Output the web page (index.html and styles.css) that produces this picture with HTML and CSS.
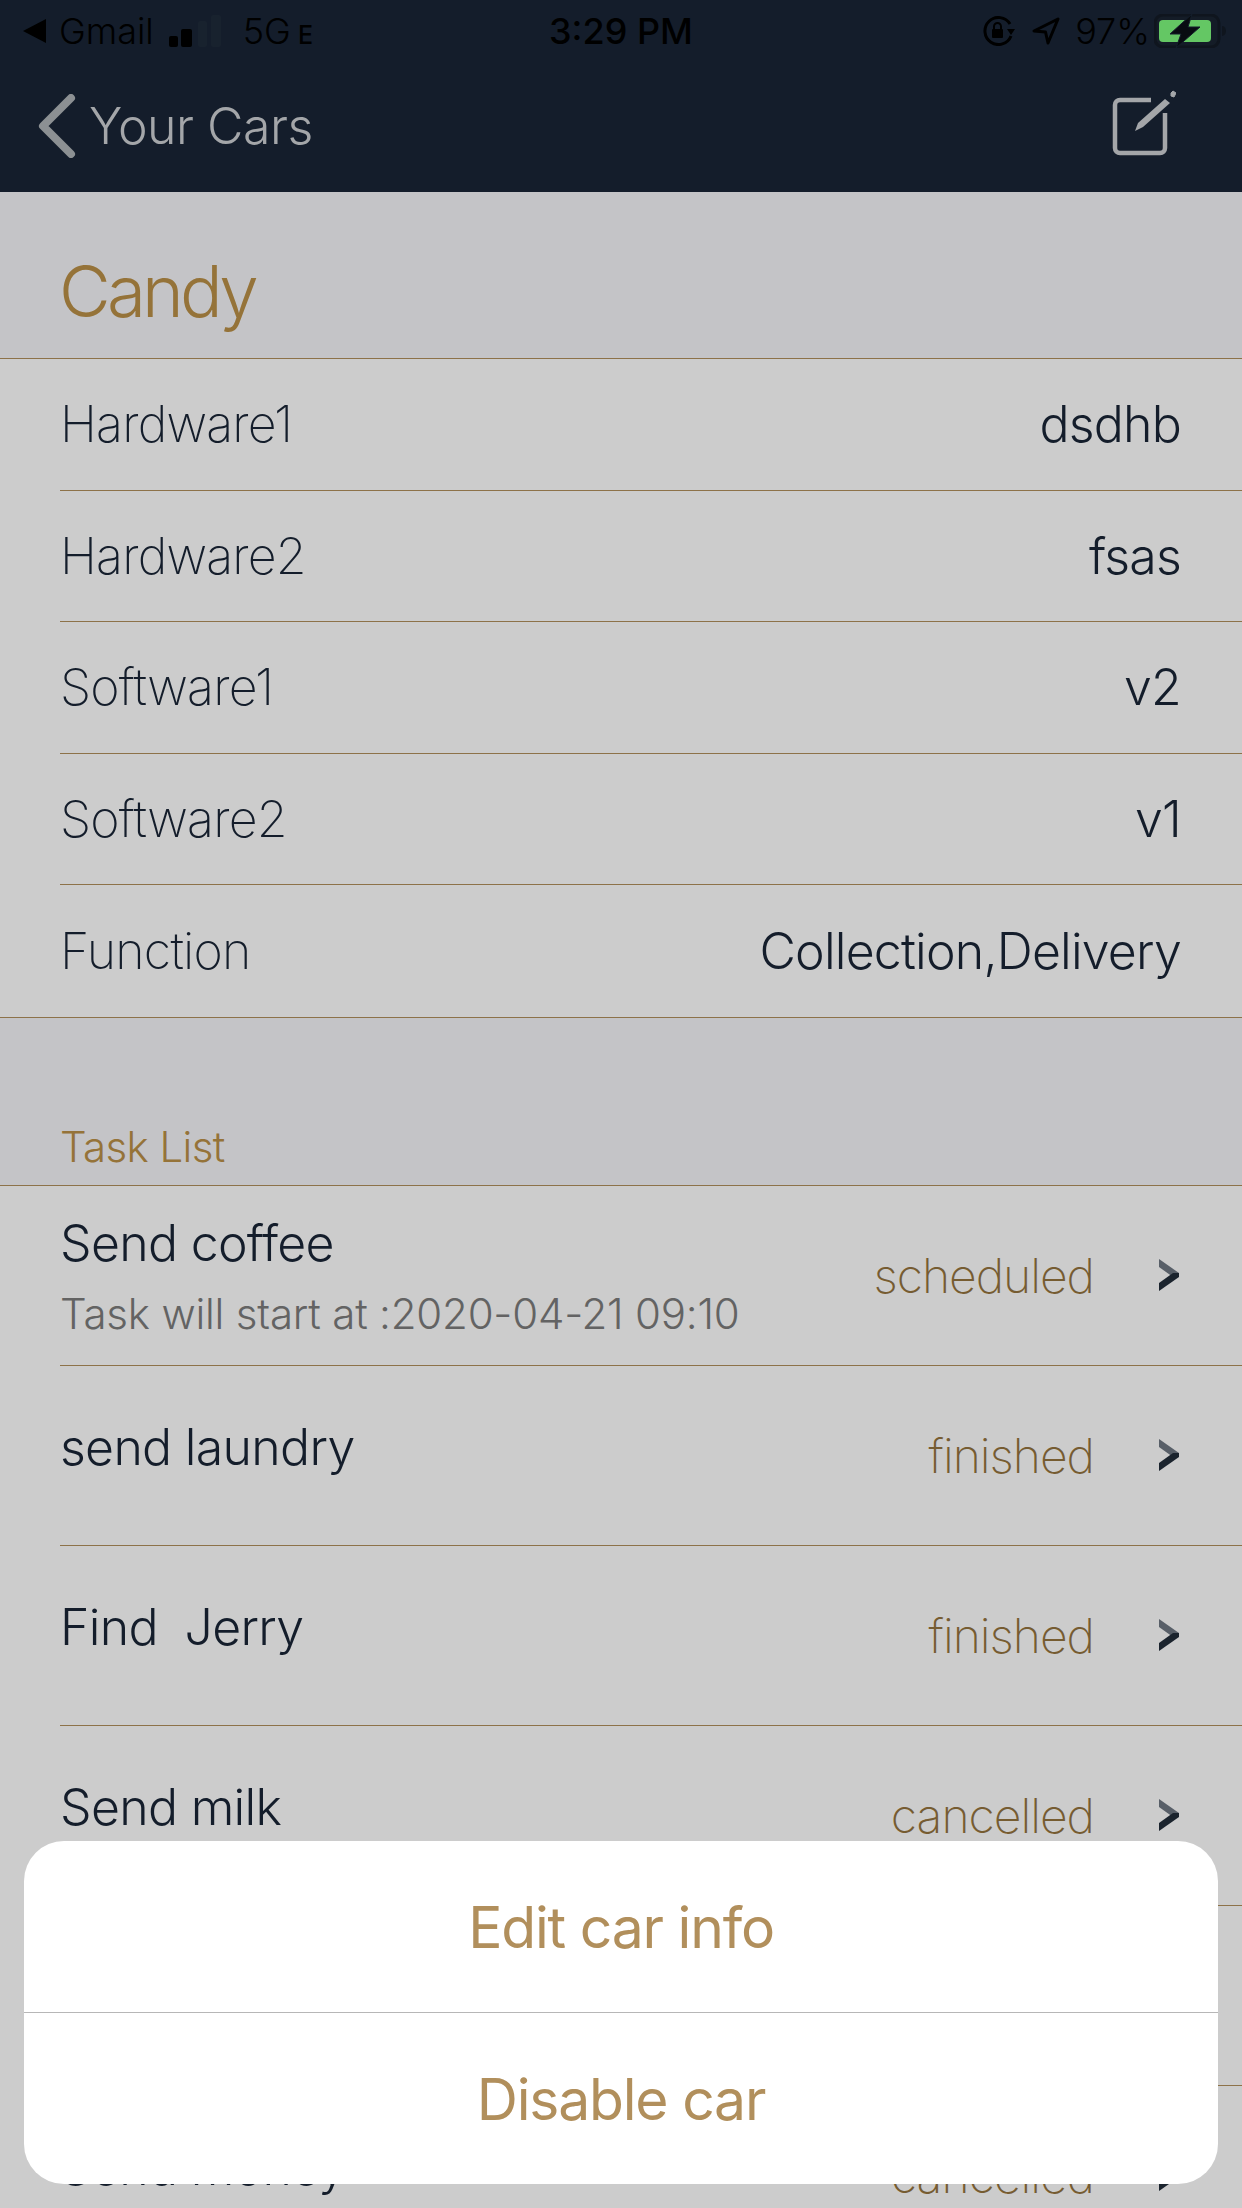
FILE: index.html
```html
<!DOCTYPE html>
<html lang="en">
<head>
  <meta charset="UTF-8">
  <title>Your Cars</title>
  <link rel="stylesheet" href="styles.css">
</head>
<body>
  <div class="screen">
    <header class="top">
      <div class="status">
        <div class="status-left">
          <svg class="back-tri" width="23" height="24" viewBox="0 0 23 24"><path d="M0 12 L23 0 V24 Z"/></svg>
          <span class="carrier">Gmail</span>
          <svg class="signal" width="52" height="32" viewBox="0 0 52 32">
            <rect x="0" y="21" width="9" height="11" rx="2"/>
            <rect x="12" y="14" width="11" height="18" rx="2"/>
            <rect class="off" x="29" y="6" width="9" height="26" rx="2"/>
            <rect class="off" x="42" y="0" width="10" height="32" rx="2"/>
          </svg>
          <span class="net">5G<small>E</small></span>
        </div>
        <div class="clock">3:29 PM</div>
        <div class="status-right">
          <svg width="33" height="30" viewBox="0 0 33 30" fill="none" stroke="#000" stroke-width="3">
            <path d="M29 20 A13.5 13.5 0 1 1 28 8"/>
            <path d="M25 13 H33 L29 19 Z" fill="#000" stroke="none"/>
            <rect x="10" y="13" width="11" height="9" rx="1" fill="#000" stroke="none"/>
            <path d="M12 13 V10.5 A3.5 3.5 0 0 1 19 10.5 V13" stroke-width="2"/>
          </svg>
          <svg class="gps" width="28" height="28" viewBox="0 0 28 28" fill="none" stroke="#000" stroke-width="3" stroke-linejoin="round"><path d="M2 14 L26 2 L16 26 L13.5 15 Z"/></svg>
          <span class="pct">97%</span>
          <svg class="batt" width="72" height="34" viewBox="0 0 72 34">
            <rect x="1" y="1" width="64" height="32" rx="8" fill="#1a2431" stroke="#131b26" stroke-width="3"/>
            <rect x="5" y="6" width="52" height="22" rx="4" fill="#7ef97e"/>
            <path d="M68 12 a4 5 0 0 1 0 10 Z" fill="#131b26"/>
            <path d="M38 0 L16 20 H27 L22 34 L46 13 H34 Z" fill="#0a0f16" stroke="#192536" stroke-width="1"/>
          </svg>
        </div>
      </div>
      <nav class="nav">
        <div class="nav-back">
          <svg width="38" height="64" viewBox="0 0 38 64" fill="none" stroke="#afb4b8" stroke-width="8" stroke-linecap="round" stroke-linejoin="round"><path d="M33 4 L5 32 L33 60"/></svg>
          <span>Your Cars</span>
        </div>
        <svg class="nav-edit" width="64" height="66" viewBox="0 0 64 66" fill="none">
          <path d="M39 10 H8 a5 5 0 0 0 -5 5 V58 a5 5 0 0 0 5 5 H48 a5 5 0 0 0 5 -5 V23" stroke="#cdd0d4" stroke-width="4.5"/>
          <path d="M23 41 L26 33 L53 9 L58 13 L31 37 Z" fill="#cdd0d4"/>
          <path d="M59 3 L61 1 L64 3 L62 7 L59 6 Z" fill="#cdd0d4" stroke="#cdd0d4" stroke-width="1"/>
        </svg>
      </nav>
    </header>

    <main>
      <h1 class="car-name">Candy</h1>
      <ul class="info">
        <li><span class="info-label">Hardware1</span><span class="info-value">dsdhb</span></li>
        <li><span class="info-label">Hardware2</span><span class="info-value">fsas</span></li>
        <li><span class="info-label">Software1</span><span class="info-value">v2</span></li>
        <li><span class="info-label">Software2</span><span class="info-value">v1</span></li>
        <li><span class="info-label">Function</span><span class="info-value">Collection,Delivery</span></li>
      </ul>

      <h2 class="section">Task List</h2>
      <ul class="tasks">
        <li>
          <div class="task-text"><div class="task-title">Send coffee</div><div class="task-sub">Task will start at :2020-04-21 09:10</div></div>
          <span class="task-state">scheduled</span>
          <svg class="chev" width="20" height="32" viewBox="0 0 20 32"><path d="M0 0 L20 14 L14 18 L0 8 Z" fill="#6e7783"/><path d="M20 14 V18 L0 32 V24 L14 14 Z" fill="#222d3a"/></svg>
        </li>
        <li>
          <div class="task-text"><div class="task-title">send laundry</div></div>
          <span class="task-state">finished</span>
          <svg class="chev" width="20" height="32" viewBox="0 0 20 32"><path d="M0 0 L20 14 L14 18 L0 8 Z" fill="#6e7783"/><path d="M20 14 V18 L0 32 V24 L14 14 Z" fill="#222d3a"/></svg>
        </li>
        <li>
          <div class="task-text"><div class="task-title">Find&nbsp; Jerry</div></div>
          <span class="task-state">finished</span>
          <svg class="chev" width="20" height="32" viewBox="0 0 20 32"><path d="M0 0 L20 14 L14 18 L0 8 Z" fill="#6e7783"/><path d="M20 14 V18 L0 32 V24 L14 14 Z" fill="#222d3a"/></svg>
        </li>
        <li>
          <div class="task-text"><div class="task-title">Send milk</div></div>
          <span class="task-state">cancelled</span>
          <svg class="chev" width="20" height="32" viewBox="0 0 20 32"><path d="M0 0 L20 14 L14 18 L0 8 Z" fill="#6e7783"/><path d="M20 14 V18 L0 32 V24 L14 14 Z" fill="#222d3a"/></svg>
        </li>
        <li></li>
        <li>
          <div class="task-text"><div class="task-title">Send money</div></div>
          <span class="task-state">cancelled</span>
          <svg class="chev" width="20" height="32" viewBox="0 0 20 32"><path d="M0 0 L20 14 L14 18 L0 8 Z" fill="#6e7783"/><path d="M20 14 V18 L0 32 V24 L14 14 Z" fill="#222d3a"/></svg>
        </li>
      </ul>
    </main>

    <div class="dim"></div>
    <div class="sheet">
      <button class="sheet-btn">Edit car info</button>
      <button class="sheet-btn">Disable car</button>
    </div>
  </div>
</body>
</html>
```

FILE: styles.css
```css
html, body { margin: 0; padding: 0; }
body { font-family: Inter, "Noto Sans", sans-serif; background: #fff; color: #192536; }
ul { list-style: none; margin: 0; padding: 0; }

.screen { position: relative; width: 1242px; height: 2208px; overflow: hidden; background: #fff; }

/* top bar */
.top { height: 192px; background: #192536; }
.status {
  height: 62px;
  display: grid;
  grid-template-columns: 1fr auto 1fr;
  align-items: center;
  color: #000;
  font-size: 36px;
  font-weight: 300;
}
.status-left { display: flex; align-items: center; padding-left: 23px; }
.back-tri { margin-right: 13px; }
.signal { margin-left: 15px; margin-right: 22px; }
.signal .off { fill: #1f2b3a; }
.net small { font-size: 25px; font-weight: 500; margin-left: 7px; }
.clock { font-weight: 500; }
.status-right { display: flex; align-items: center; justify-content: flex-end; padding-right: 16px; }
.gps { margin-left: 17px; }
.pct { margin-left: 15px; }
.batt { margin-left: 4px; }

.nav { display: flex; justify-content: space-between; align-items: flex-start; padding: 32px 66px 0 38px; }
.nav-back { display: flex; align-items: center; gap: 13px; color: #cdd0d4; font-size: 50px; font-weight: 300; letter-spacing: -0.5px; }
.nav-edit { margin-top: -4px; }

/* car info */
main { background: #f5f6f9; }
.car-name {
  margin: 0;
  height: 167px;
  padding: 32px 59px 0;
  box-sizing: border-box;
  display: flex;
  align-items: center;
  color: #bb9048;
  font-size: 71px;
  font-weight: 300;
  letter-spacing: -3.8px;
  border-bottom: 1px solid #b18f5c;
}
.info, .tasks { background: #fff; border-bottom: 1px solid #b18f5c; }
.info li {
  height: 131.6px;
  margin-left: 60px;
  padding-right: 61px;
  box-sizing: border-box;
  display: flex;
  justify-content: space-between;
  align-items: center;
  font-size: 50px;
  letter-spacing: -0.8px;
  border-bottom: 1px solid #b18f5c;
}
.info li:last-child { border-bottom: none; }
.info-label { font-weight: 200; }
.info-value { font-weight: 300; }

.section {
  margin: 0;
  height: 168px;
  padding: 0 60px 13px;
  box-sizing: border-box;
  display: flex;
  align-items: flex-end;
  color: #bb9048;
  font-size: 42px;
  font-weight: 300;
  letter-spacing: -0.6px;
  border-bottom: 1px solid #b18f5c;
}

/* tasks */
.tasks li {
  height: 180px;
  margin-left: 60px;
  padding-right: 63px;
  box-sizing: border-box;
  display: flex;
  align-items: center;
  border-bottom: 1px solid #b18f5c;
}
.task-text { flex: 1; }
.task-title { font-size: 50px; font-weight: 300; line-height: 60px; letter-spacing: -0.7px; margin-bottom: 16px; }
.task-sub { font-size: 42px; font-weight: 300; line-height: 50px; letter-spacing: -0.2px; color: #7c7c7c; margin-bottom: -2px; }
.task-state { color: #94733e; font-size: 48px; font-weight: 150; letter-spacing: -1px; margin-right: 65px; }

/* action sheet */
.dim { position: absolute; inset: 0; background: rgba(0, 0, 0, 0.2); }
.sheet {
  position: absolute;
  left: 24px;
  top: 1841px;
  width: 1194px;
  height: 343px;
  display: flex;
  flex-direction: column;
  background: #fff;
  border-radius: 40px;
  overflow: hidden;
}
.sheet-btn {
  flex: 1;
  border: none;
  background: none;
  font-family: inherit;
  font-size: 57px;
  font-weight: 400;
  letter-spacing: -1.2px;
  color: #b18f5c;
  padding: 2px 0 0;
}
.sheet-btn + .sheet-btn { border-top: 1px solid #b7b7b7; }
```
